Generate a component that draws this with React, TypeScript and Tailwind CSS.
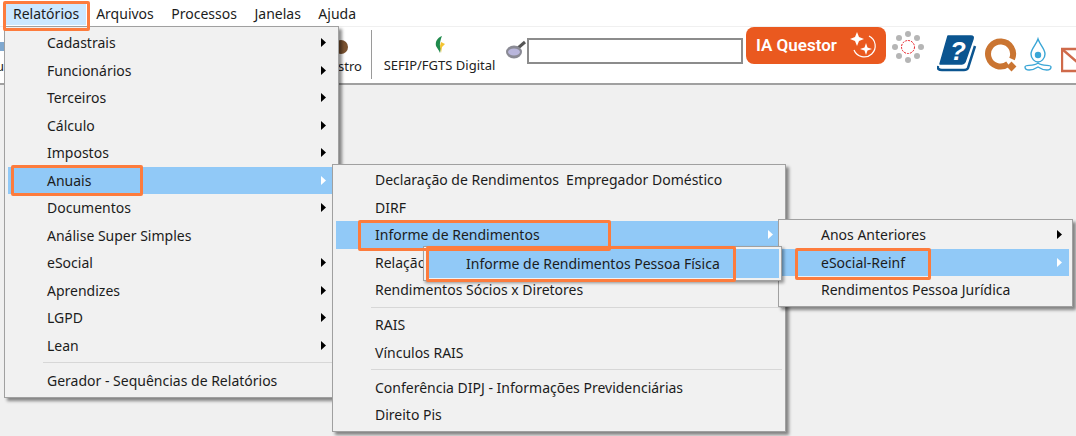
import React from "react";

type Item = { label: string; arrow?: boolean; active?: boolean } | "sep";

const main: Item[] = [
  { label: "Cadastrais", arrow: true },
  { label: "Funcionários", arrow: true },
  { label: "Terceiros", arrow: true },
  { label: "Cálculo", arrow: true },
  { label: "Impostos", arrow: true },
  { label: "Anuais", arrow: true, active: true },
  { label: "Documentos", arrow: true },
  { label: "Análise Super Simples" },
  { label: "eSocial", arrow: true },
  { label: "Aprendizes", arrow: true },
  { label: "LGPD", arrow: true },
  { label: "Lean", arrow: true },
  "sep",
  { label: "Gerador - Sequências de Relatórios" },
];

const anuais: Item[] = [
  { label: "Declaração de Rendimentos  Empregador Doméstico" },
  { label: "DIRF" },
  { label: "Informe de Rendimentos", arrow: true, active: true },
  { label: "Relação" },
  { label: "Rendimentos Sócios x Diretores" },
  "sep",
  { label: "RAIS" },
  { label: "Vínculos RAIS" },
  "sep",
  { label: "Conferência DIPJ - Informações Previdenciárias" },
  { label: "Direito Pis" },
];

const informe: Item[] = [
  { label: "Anos Anteriores", arrow: true },
  { label: "eSocial-Reinf", arrow: true, active: true },
  { label: "Rendimentos Pessoa Jurídica" },
];

function Arrow({ active, className }: { active?: boolean; className: string }) {
  return (
    <svg width="5" height="9" viewBox="0 0 5 9" className={`absolute top-[9px] ${className}`}>
      <path d="M0 0L5 4.5L0 9Z" fill={active ? "#ffffff" : "#000000"} />
    </svg>
  );
}

function Menu({ items, className, arrowClass }: { items: Item[]; className: string; arrowClass: string }) {
  return (
    <div className={`absolute z-10 border border-[#a0a0a0] bg-[#f1f1f1] pr-[3px] pl-[3px] shadow-[3px_3px_3px_rgba(0,0,0,0.45)] ${className}`}>
      {items.map((it, i) =>
        it === "sep" ? (
          <div key={i} className="flex h-[7.5px] items-center pl-[35px]">
            <div className="h-px w-full bg-[#d7d7d7]" />
          </div>
        ) : (
          <div
            key={i}
            className={`relative flex h-[27.5px] items-center whitespace-pre pl-[39px] ${it.active ? "bg-[#91c9f7]" : ""}`}
          >
            {it.label}
            {it.arrow && <Arrow active={it.active} className={arrowClass} />}
          </div>
        )
      )}
    </div>
  );
}

function Mark({ className }: { className: string }) {
  return <div className={`pointer-events-none absolute z-30 rounded-[2px] border-[3px] border-[#fd7c3d] ${className}`} />;
}

export default function App() {
  return (
    <div
      className="relative h-[436px] w-[1076px] overflow-hidden bg-[#f0f0f0] text-[14px] text-[#1c1c1c]"
      style={{ fontFamily: '"Noto Sans", sans-serif' }}
    >
      {/* menu bar */}
      <div className="flex h-[26px] items-center bg-white pl-[6px]">
        <div className="mr-[9px] flex h-[24px] items-center bg-[#cce8ff] px-[7px]">Relatórios</div>
        {["Arquivos", "Processos", "Janelas", "Ajuda"].map((m) => (
          <div key={m} className="mr-[16.5px] ml-[1px]">{m}</div>
        ))}
      </div>

      {/* toolbar */}
      <div className="flex h-[59px] items-start overflow-hidden border-t border-b-2 border-t-[#f0f0f0] border-b-[#a0a0a0] bg-white">
        <div className="flex w-[4px] shrink-0 flex-col overflow-hidden">
          <div className="mt-[15px] h-[9px] w-[4px] bg-[#7fa8cf]" />
          <span className="mt-[7px] ml-[-4px] text-[13px] leading-[16px] text-[#222]">u</span>
        </div>
        <div className="ml-[334px] flex w-[22px] shrink-0 flex-col items-start">
          <svg width="14" height="24" viewBox="0 0 14 24" className="mt-[7px] ml-[-2px]">
            <circle cx="5" cy="13" r="7" fill="#7a5230" />
          </svg>
          <span className="mt-[0px] text-[13px] leading-[16px] text-[#222]">stro</span>
        </div>
        <div className="mt-[3px] ml-[11px] h-[49px] w-px shrink-0 bg-[#9a9a9a]" />
        <div className="ml-[12px] flex w-[111px] shrink-0 flex-col items-center">
          <svg width="12" height="22" viewBox="0 0 12 22" className="mt-[8px]">
            <path d="M8 1C3 3 1 7 2 11C3 13 5 15 6 18L7 13C5 11 6 6 8 1Z" fill="#1f8a4c" />
            <path d="M7 7L11 9L8 12L7 18L6 11Z" fill="#f4c430" />
          </svg>
          <span className="text-[13px] leading-[16px] whitespace-nowrap text-[#222]">SEFIP/FGTS Digital</span>
        </div>
        <svg width="22" height="22" viewBox="0 0 22 22" className="mt-[12px] ml-[10px] shrink-0">
          <path d="M13 9L20 3" stroke="#555" strokeWidth="3" />
          <ellipse cx="9" cy="13" rx="8" ry="6.5" fill="#8a8a94" />
          <ellipse cx="9" cy="13" rx="6" ry="3.5" fill="#b9b6dc" />
        </svg>
        <div className="mt-[11px] h-[26px] w-[216px] shrink-0 border-2 border-[#8c8c8c] bg-white" />
        <div className="ml-[3px] flex h-[37px] w-[140px] shrink-0 items-center justify-between rounded-[8px] bg-[#ea591f] pr-[8px] pl-[10px] text-[17px] font-semibold text-white">
          <span style={{ fontFamily: "Roboto, sans-serif" }}>IA Questor</span>
          <svg width="28" height="28" viewBox="0 0 28 28" fill="none">
            <path d="M19 4A11 11 0 1 1 4 18" stroke="#fff" strokeWidth="1.2" />
            <path d="M7 0L9 5L14 7L9 9L7 14L5 9L0 7L5 5Z" fill="#fff" />
            <path d="M16 11L17.5 15.5L22 17L17.5 18.5L16 23L14.5 18.5L10 17L14.5 15.5Z" fill="#fff" />
          </svg>
        </div>
        <svg width="32" height="32" viewBox="0 0 32 32" className="mt-[4px] ml-[6px] shrink-0">
          {[[16, 3], [25, 7], [29, 16], [25, 25], [16, 29], [7, 25], [3, 16], [7, 7]].map(([x, y], i) => (
            <circle key={i} cx={x} cy={y} r="3" fill="#b5b5b5" />
          ))}
          <circle cx="16" cy="16" r="6.5" fill="#fff" stroke="#e8232a" strokeWidth="1" strokeDasharray="2 1" />
        </svg>
        <svg width="40" height="38" viewBox="0 0 40 38" className="mt-[7px] ml-[13px] shrink-0">
          <path d="M11 2H34Q37 2 36 5L28 28Q27 30 25 30H3Z" fill="#0b5590" stroke="#0b5590" strokeWidth="1.5" strokeLinejoin="round" />
          <path d="M38 12L31 34Q30 36 27 36H5Q0 36 1 32" fill="none" stroke="#0b5590" strokeWidth="2.5" />
          <text x="13" y="26" fontSize="26" fontWeight="700" fontStyle="italic" fill="#fff" fontFamily="Liberation Sans, sans-serif">?</text>
        </svg>
        <svg width="36" height="38" viewBox="0 0 36 38" className="mt-[10px] ml-[6px] shrink-0">
          <path d="M25 27A12.5 12.5 0 1 1 29 22" fill="none" stroke="#ca7532" strokeWidth="6" />
          <path d="M28.5 26L32 29.5L28.5 33L25 29.5Z" fill="#ca7532" stroke="#ca7532" strokeWidth="2" />
        </svg>
        <svg width="30" height="36" viewBox="0 0 30 36" className="mt-[9px] ml-[5px] shrink-0" fill="none" stroke="#3aa6d6" strokeWidth="1.4">
          <path d="M14 3C12 9 7 13 7 18C7 23 11 26 14 26C17 26 21 23 21 18C21 13 16 9 14 3Z" />
          <circle cx="14" cy="19" r="2.5" fill="#3aa6d6" />
          <path d="M14 27C9 31 1 28 1 31C1 35 8 35 14 31C20 35 27 35 27 31C27 28 19 31 14 27Z" />
        </svg>
        <svg width="15" height="26" viewBox="0 0 15 26" className="mt-[20px] ml-[7px] shrink-0" fill="none" stroke="#cf6a4a" strokeWidth="2.4">
          <path d="M1 2H30V24H1Z" />
          <path d="M1 2L16 15L30 2" />
        </svg>
      </div>

      <Menu items={main} arrowClass="right-[9px]" className="top-[26px] left-[4px] w-[335px] pt-[2px] pb-[3px]" />
      <Menu items={anuais} arrowClass="right-[9px]" className="top-[164px] left-[332px] z-[11] w-[454px] pt-[1px] pb-[2.5px]" />
      <Menu items={informe} arrowClass="right-[7px]" className="top-[219px] left-[778px] z-[12] w-[295px] pt-[1px] pb-[2.5px]" />

      {/* small floating item over the Anuais submenu */}
      <div className="absolute top-[246px] left-[423px] z-20 flex h-[35px] w-[359px] border border-[#a0a0a0] bg-[#f1f1f1] p-[2px] shadow-[2px_2px_3px_rgba(0,0,0,0.4)]">
        <div className="flex flex-1 items-center bg-[#91c9f7] pl-[40px]">Informe de Rendimentos Pessoa Física</div>
      </div>

      <Mark className="top-[1px] left-[3px] h-[30px] w-[87px]" />
      <Mark className="top-[165px] left-[11px] h-[31px] w-[132px]" />
      <Mark className="top-[220px] left-[358px] h-[31px] w-[253px]" />
      <Mark className="top-[246px] left-[426px] h-[36px] w-[310px]" />
      <Mark className="top-[248px] left-[795px] h-[32px] w-[136px]" />
    </div>
  );
}
